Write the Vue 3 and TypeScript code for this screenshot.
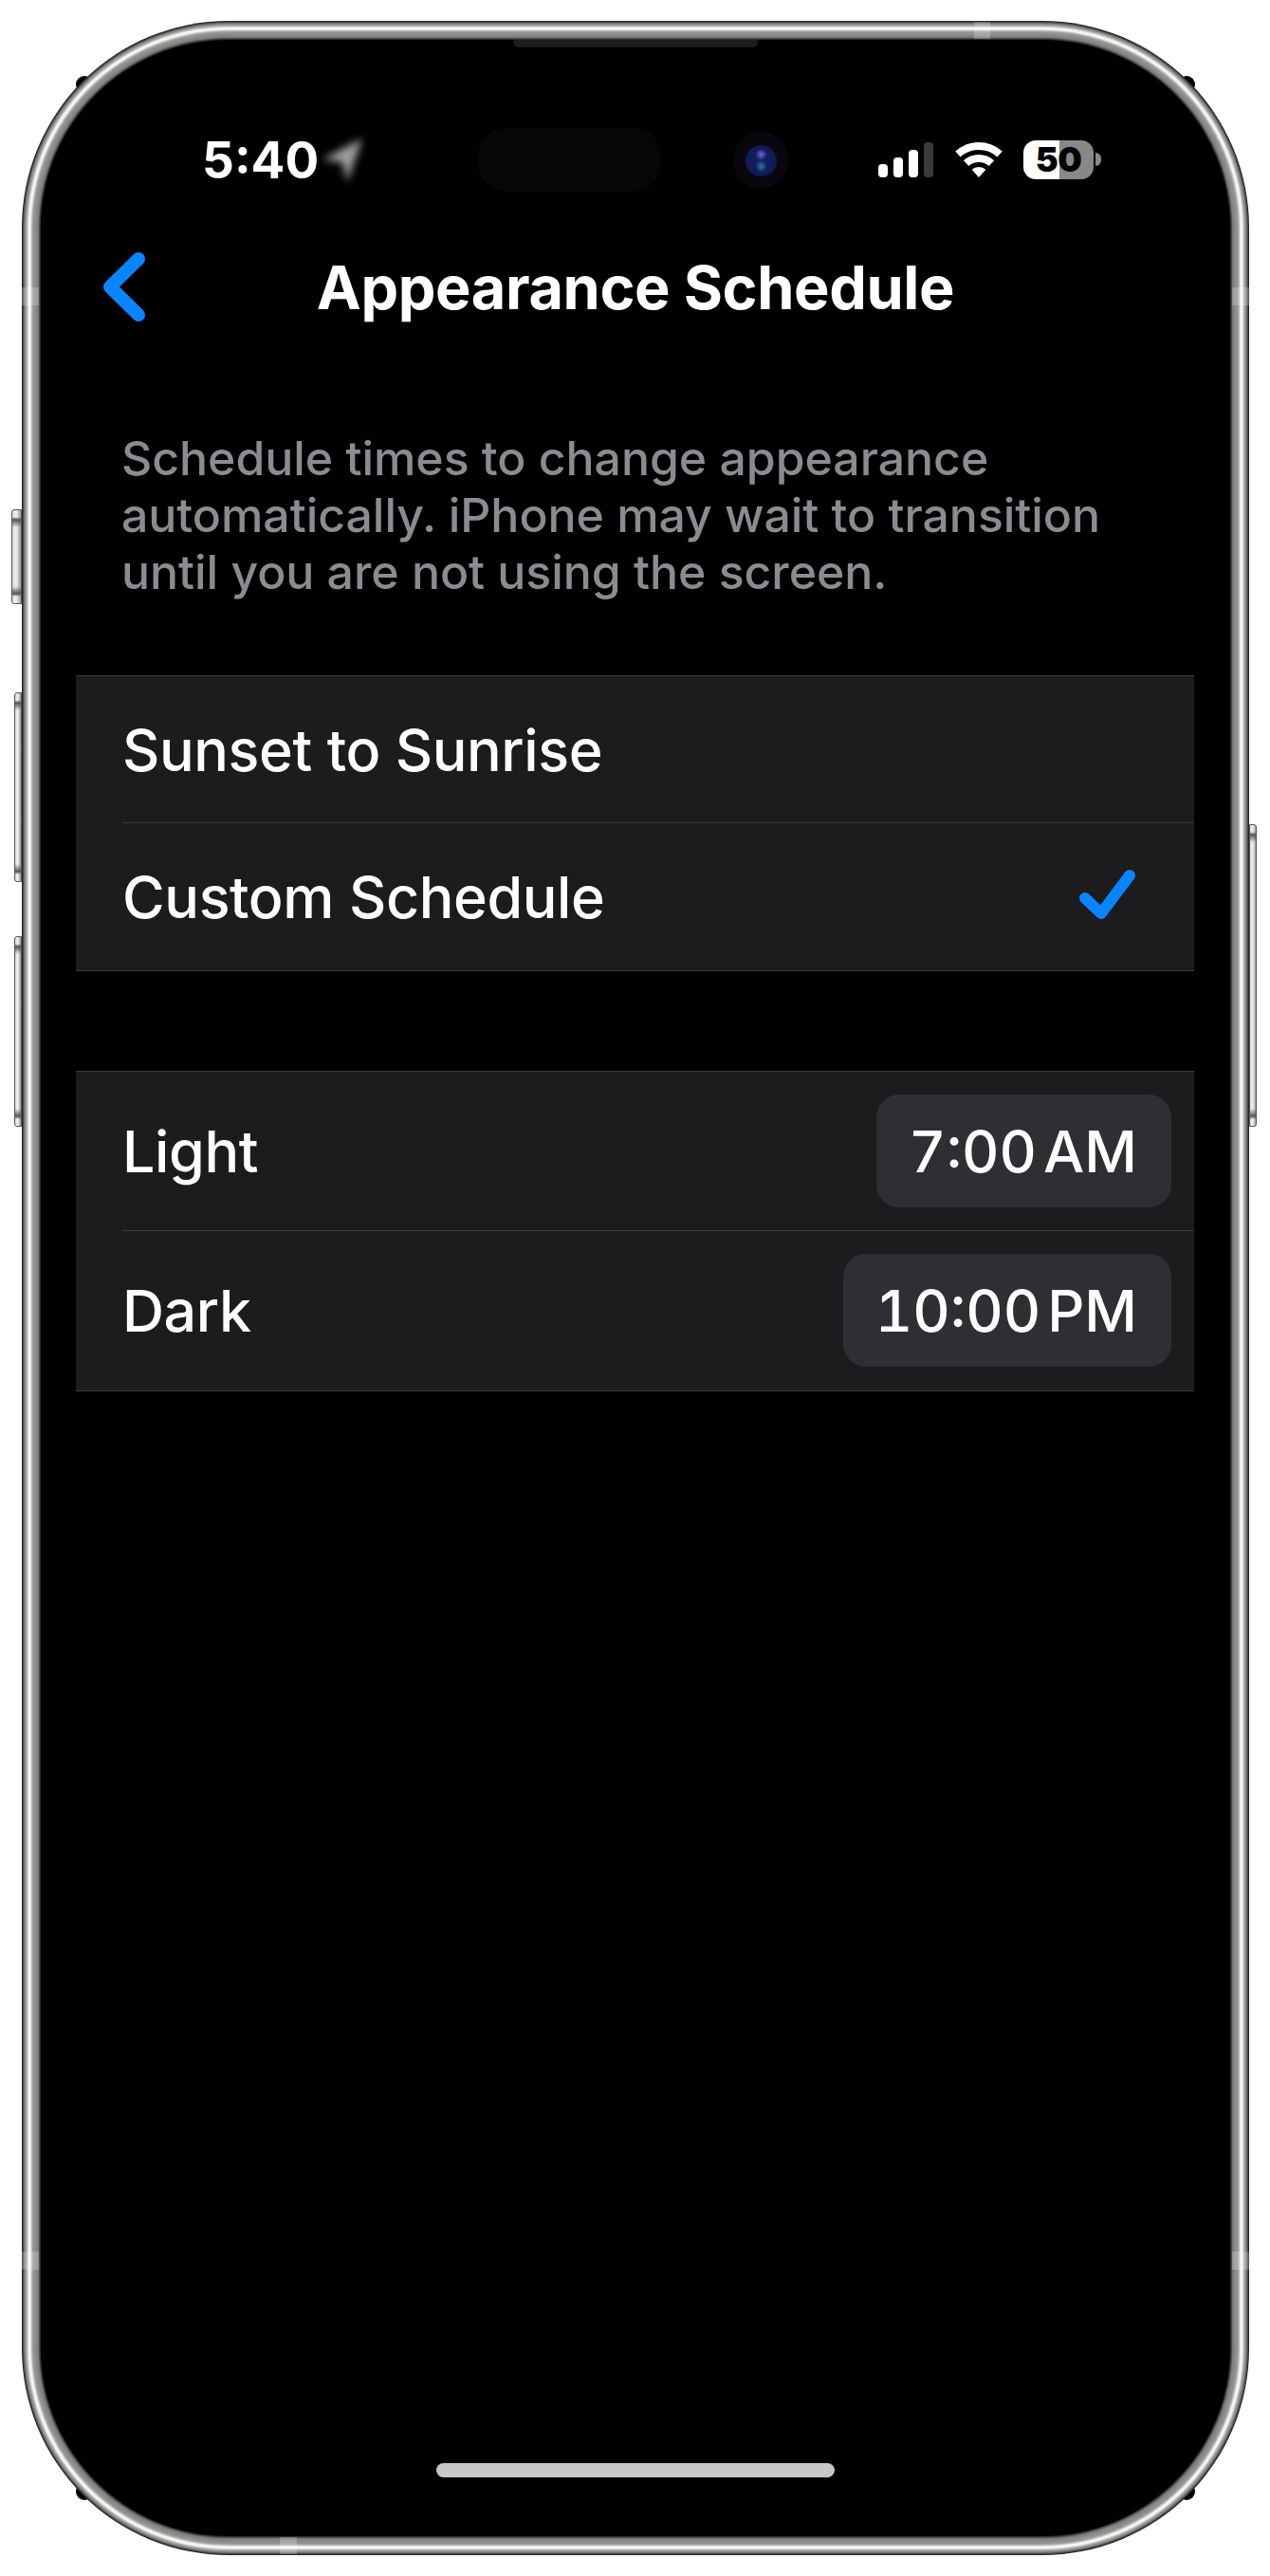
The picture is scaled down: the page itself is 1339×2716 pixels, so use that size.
<script setup lang="ts">
interface Row {
  label: string
  checked?: boolean
  time?: string
  period?: string
}

const modeRows: Row[] = [
  { label: 'Sunset to Sunrise' },
  { label: 'Custom Schedule', checked: true }
]

const timeRows: Row[] = [
  { label: 'Light', time: '7:00', period: 'AM' },
  { label: 'Dark', time: '10:00', period: 'PM' }
]

const bands = ['band-l1', 'band-l2', 'band-r1', 'band-r2', 'band-t', 'band-b']
const dots = ['dot-tl', 'dot-tr', 'dot-bl', 'dot-br']
const buttons = ['btn-action', 'btn-up', 'btn-down', 'btn-power']
</script>

<template>
  <div class="page">
    <div class="phone">
      <!-- bits of hardware that stick out of the frame -->
      <span v-for="d in dots" :key="d" class="dot" :class="d"></span>
      <span v-for="b in buttons" :key="b" class="btn" :class="b"></span>

      <div class="screen">
        <span class="speaker"></span>
        <span class="island"></span>
        <span class="camera"><i class="lens"></i></span>

        <div class="status">
          <span class="clock">5:40</span>
          <svg class="arrow" width="54" height="56" viewBox="0 0 54 56">
            <path d="M48 6 L6 28 L27 31 L32 52 Z" fill="#a0a0a0" />
          </svg>
          <div class="status-right">
            <svg class="signal" width="58" height="37" viewBox="0 0 58 37">
              <rect x="0" y="23" width="10" height="14" rx="4" fill="#fff" />
              <rect x="16" y="16" width="10" height="21" rx="4" fill="#fff" />
              <rect x="32" y="8" width="10" height="29" rx="4" fill="#fff" />
              <rect x="48" y="0" width="10" height="37" rx="4" fill="#3a3a3a" />
            </svg>
            <svg class="wifi" width="50" height="37" viewBox="0 0 50 37">
              <path d="M2.9 12.5 A33 33 0 0 1 47.1 12.5" fill="none" stroke="#fff" stroke-width="8" />
              <path d="M11.6 22.1 A20 20 0 0 1 38.4 22.1" fill="none" stroke="#fff" stroke-width="8" />
              <path d="M25 37 L17.6 28.8 A11 11 0 0 1 32.4 28.8 Z" fill="#fff" />
            </svg>
            <div class="battery">
              <span class="battery-num">50</span>
            </div>
            <span class="battery-tip"></span>
          </div>
        </div>

        <div class="nav">
          <svg class="back" width="44" height="73" viewBox="0 0 44 73">
            <path d="M37 7 L7 36.5 L37 66" fill="none" stroke="#0a84ff" stroke-width="14" stroke-linecap="round" stroke-linejoin="round" />
          </svg>
          <span class="title">Appearance Schedule</span>
        </div>

        <p class="desc">Schedule times to change appearance automatically. iPhone may wait to transition until you are not using the screen.</p>

        <div class="group">
          <div v-for="row in modeRows" :key="row.label" class="row row-mode">
            <span class="label label-mode">{{ row.label }}</span>
            <svg v-if="row.checked" class="check" width="60" height="58" viewBox="0 0 60 58">
              <path d="M6 31 L23 47 L53 7" fill="none" stroke="#0a84ff" stroke-width="12" stroke-linecap="round" stroke-linejoin="round" />
            </svg>
          </div>
        </div>

        <div class="group group-times">
          <div v-for="row in timeRows" :key="row.label" class="row row-time">
            <span class="label">{{ row.label }}</span>
            <span class="pill">{{ row.time }}<span class="period">{{ row.period }}</span></span>
          </div>
        </div>

        <div class="spacer"></div>
        <span class="home"></span>

        <span v-for="b in bands" :key="b" class="band" :class="b"></span>
      </div>
    </div>
  </div>
</template>

<style>
html,
body {
  margin: 0;
  background: #fff;
}
</style>

<style scoped>
.page {
  width: 1339px;
  height: 2716px;
  padding: 42px 42px 0 43px;
  box-sizing: border-box;
  overflow: hidden;
  font-family: Inter, "Liberation Sans", sans-serif;
}

.phone {
  position: relative;
  width: 1254px;
  height: 2632px;
}

.screen {
  position: relative;
  display: flex;
  flex-direction: column;
  width: 100%;
  height: 100%;
  background: #000;
  border-radius: 198px;
  color: #fff;
  box-shadow:
    0 0 0 1px #2e2e2e,
    0 0 0 2px #4c4c4c,
    0 0 0 3px #757575,
    0 0 0 4px #808080,
    0 0 0 5px #878787,
    0 0 0 6px #8c8c8c,
    0 0 0 7px #909090,
    0 0 0 8px #949494,
    0 0 0 9px #a0a0a0,
    0 0 0 10px #bcbcb8,
    0 0 0 11px #e4e4de,
    0 0 0 12px #f8f8f2,
    0 0 0 13px #f6f6f0,
    0 0 0 14px #dcdcd6,
    0 0 0 15px #b4b4b4,
    0 0 0 16px #9c9c9c,
    0 0 0 17px #8a8a8a,
    0 0 0 18px #707070,
    0 0 0 19px #484848,
    0 0 0 20px #262626;
}

.dot {
  position: absolute;
  width: 18px;
  height: 18px;
  border-radius: 50%;
  background: #000;
}
.dot-tl { left: 37px; top: 38px; }
.dot-tr { right: 37px; top: 38px; }
.dot-bl { left: 37px; bottom: 38px; }
.dot-br { right: 37px; bottom: 38px; }

.btn {
  position: absolute;
  box-sizing: border-box;
  border: 1px solid #555;
  background:
    linear-gradient(180deg, transparent 0 7px, #555 10px, transparent 18px, transparent calc(100% - 18px), #555 calc(100% - 10px), transparent calc(100% - 7px)),
    linear-gradient(90deg, #d8d8d8, #f2f2f2 45%, #9a9a9a);
  border-radius: 3px 0 0 3px;
}
.btn-action { left: -31px; top: 495px; width: 11px; height: 100px; }
.btn-up { left: -28px; top: 688px; width: 8px; height: 200px; }
.btn-down { left: -28px; top: 945px; width: 8px; height: 201px; }
.btn-power { right: -28px; top: 827px; width: 8px; height: 319px; border-radius: 0 3px 3px 0; }

.band {
  position: absolute;
  background: rgba(255, 255, 255, 0.22);
}
.band-l1 { left: -20px; top: 261px; width: 18px; height: 19px; }
.band-l2 { left: -20px; bottom: 281px; width: 18px; height: 19px; }
.band-r1 { right: -20px; top: 261px; width: 18px; height: 19px; }
.band-r2 { right: -20px; bottom: 281px; width: 18px; height: 19px; }
.band-t { left: 984px; top: -19px; width: 17px; height: 18px; }
.band-b { left: 252px; bottom: -19px; width: 18px; height: 18px; }

.speaker {
  position: absolute;
  left: 498px;
  top: 0;
  width: 258px;
  height: 8px;
  background: #1c1c1c;
  border-radius: 0 0 6px 6px;
}

.island {
  position: absolute;
  left: 461px;
  top: 93px;
  width: 193px;
  height: 67px;
  background: #070707;
  border-radius: 30px;
}

.camera {
  position: absolute;
  left: 730px;
  top: 97px;
  width: 58px;
  height: 60px;
  display: flex;
  align-items: center;
  justify-content: center;
  background: #0a060e;
  border-radius: 50%;
}

.lens {
  width: 33px;
  height: 33px;
  border-radius: 50%;
  background:
    radial-gradient(circle at 50% 30%, #6a65d8 0, transparent 22%),
    radial-gradient(circle at 50% 68%, #1a8a88 0, transparent 22%),
    radial-gradient(circle, #14206e 0, #101a52 70%, #0a0f30 100%);
}

.status {
  display: flex;
  align-items: center;
  height: 188px;
  padding: 64px 136px 0 170px;
  box-sizing: border-box;
}

.clock {
  font-size: 53px;
  font-weight: 700;
  line-height: 1;
  margin-top: 2px;
}

.arrow {
  margin-left: -2px;
  filter: blur(4.5px);
}

.status-right {
  display: flex;
  align-items: center;
  margin-left: auto;
}

.wifi {
  margin-left: 23px;
}

.battery {
  position: relative;
  width: 74px;
  height: 41px;
  margin-left: 22px;
  border-radius: 13px;
  background: linear-gradient(90deg, #fff 0 38px, #888 38px);
  display: flex;
  align-items: center;
  justify-content: center;
}

.battery-num {
  color: #000;
  font-size: 36px;
  font-weight: 900;
  letter-spacing: -0.5px;
  line-height: 1;
}

.battery-tip {
  width: 6px;
  height: 14px;
  margin-left: 2px;
  background: #888;
  border-radius: 0 7px 7px 0;
}

.nav {
  position: relative;
  display: flex;
  align-items: center;
  justify-content: center;
  height: 146px;
}

.back {
  position: absolute;
  left: 66px;
  top: 36px;
}

.title {
  font-size: 63px;
  font-weight: 700;
  letter-spacing: -0.4px;
}

.desc {
  margin: 0 80px 0 85px;
  padding-top: 77px;
  font-size: 50px;
  font-weight: 500;
  letter-spacing: -0.05px;
  line-height: 60px;
  color: #8c8b91;
}

.group {
  margin: 79px 38px 0 37px;
  background: #1c1c1e;
  border-top: 1px solid #3a3a3c;
  border-bottom: 1px solid #3a3a3c;
}

.group-times {
  margin-top: 105px;
}

.row {
  display: flex;
  align-items: center;
  justify-content: space-between;
  padding-left: 49px;
  box-sizing: border-box;
  position: relative;
}

.row + .row::before {
  content: "";
  position: absolute;
  left: 49px;
  right: 0;
  top: 0;
  height: 1px;
  background: #3a3a3c;
}

.row-mode {
  height: 154px;
  padding-right: 61px;
}

.row-mode + .row-mode {
  height: 156px;
}

.row-time {
  height: 167px;
  padding-right: 24px;
}

.row-time + .row-time {
  height: 169px;
}

.label {
  font-size: 61px;
  font-weight: 500;
  letter-spacing: -0.4px;
}

.label-mode {
  margin-top: 2px;
}

.pill {
  display: flex;
  align-items: center;
  height: 119px;
  padding: 0 36px 0 34px;
  font-size: 61px;
  font-weight: 500;
  font-variant-numeric: tabular-nums;
  background: #2f2f33;
  border-radius: 24px;
}

.period {
  margin-left: 7px;
}

.spacer {
  flex: 1;
}

.home {
  align-self: center;
  width: 420px;
  height: 15px;
  margin-bottom: 62px;
  background: #c8c8c8;
  border-radius: 8px;
}
</style>
